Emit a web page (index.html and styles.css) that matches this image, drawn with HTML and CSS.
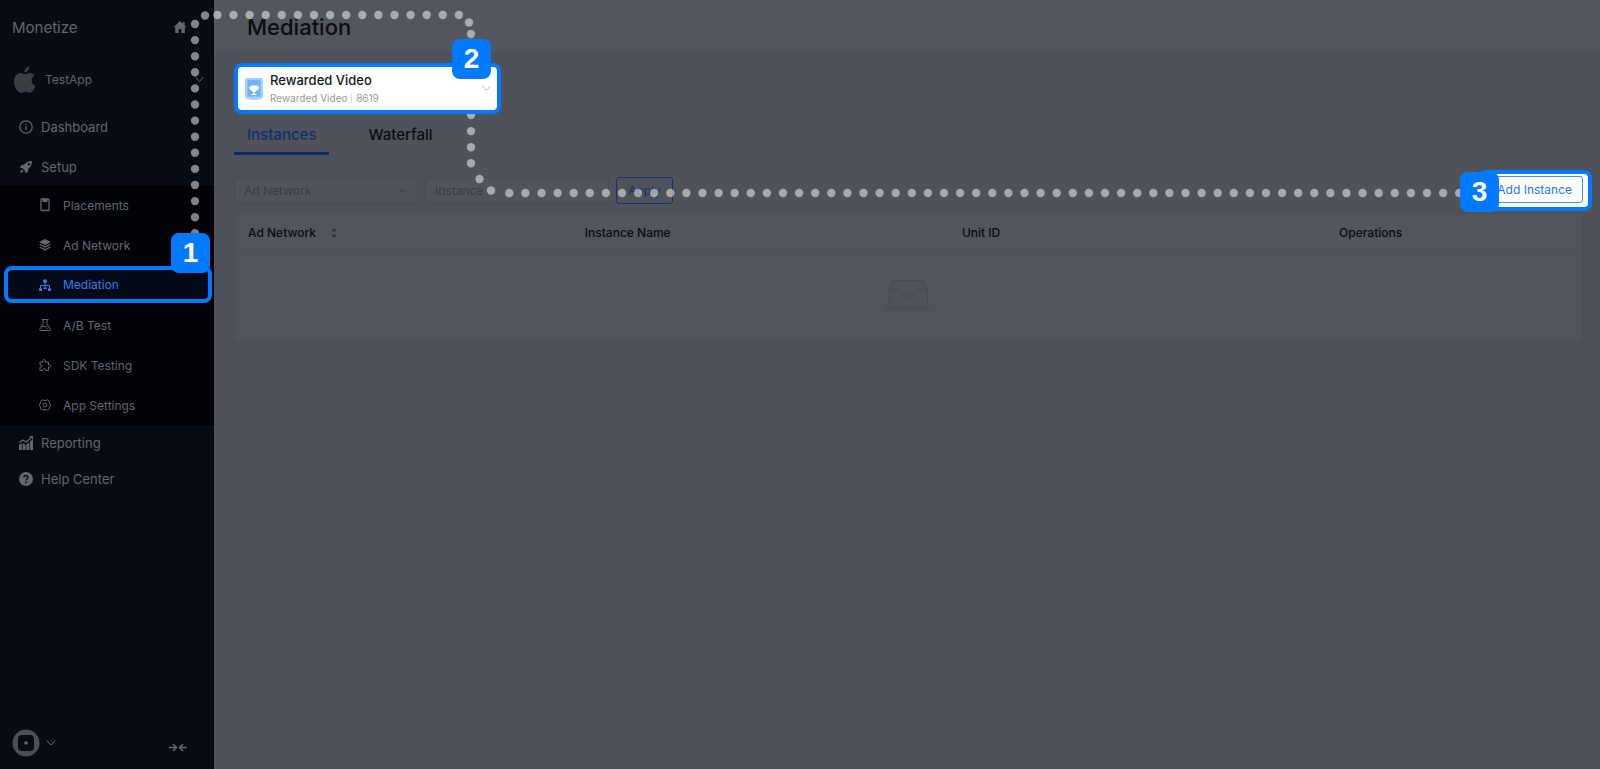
FILE: index.html
```html
<!DOCTYPE html>
<html lang="en">
<head>
    <meta charset="UTF-8">
    <meta name="viewport" content="width=device-width, initial-scale=1.0">
    <title>Mediation</title>
    <link rel="stylesheet" href="styles.css">
</head>
<body>
    <div class="layout">
        <aside class="sidebar">
            <div class="brand">
                <span>Monetize</span>
                <a href="#" class="home" aria-label="Home">
                    <svg width="14" height="14" viewBox="0 0 14 14"><path fill="currentColor" d="M7 1 0.5 7.2h1.7V13h3.5V9h2.6v4h3.5V7.2h1.7L11.6 5.300V2H10v1.800z"/></svg>
                </a>
            </div>
            <button type="button" class="app-switch">
                <svg width="22" height="28" viewBox="0 0 22 28"><path fill="#3b3d40" d="M15.500.5c.3 2.900-2.300 6-5.200 6C10 3.600 12.600.9 15.500.5zM11 8.300c1 0 2.500-1.400 5-1.300 1.800.1 3.500 1 4.500 2.500-4.300 2.700-3.500 8.700 1 10.500-.8 2.400-3 6.700-5.500 6.800-1.800 0-2.400-1.100-4.500-1.100s-2.800 1.100-4.500 1.100C3.700 26.800 0 20.800 0 15.500 0 10.200 3.200 7 6.500 7c2 0 3.400 1.300 4.500 1.300z"/></svg>
                <span>TestApp</span>
                <svg class="chevron" width="9" height="7" viewBox="0 0 9 7"><path d="M.5 1l4 4.500 4-4.500"/></svg>
            </button>

            <nav class="menu">
                <a href="#" class="menu-item">
                    <svg width="14" height="14" viewBox="0 0 14 14"><circle cx="7" cy="7" r="6.200" class="line"/><path class="line" d="M7 6v4M7 4v1"/></svg>
                    Dashboard
                </a>
                <a href="#" class="menu-item">
                    <svg width="14" height="14" viewBox="0 0 14 14"><path fill="currentColor" fill-rule="evenodd" d="M13 1C9.500 1 7 2.300 5.200 4.700L2.300 5 .7 7.800l2.500.2 2.800 2.800.2 2.500L9 11.700l.3-2.900C11.700 7 13 4.500 13 1zM8.500 4.200a1.300 1.300 0 1 1 1.300 1.300 1.300 1.300 0 0 1-1.300-1.300zM2.500 9.300 1 13l3.700-1.500z"/></svg>
                    Setup
                </a>
                <div class="submenu">
                    <a href="#" class="submenu-item">
                        <svg width="12" height="14" viewBox="0 0 12 14"><rect x="2" y="1" width="8" height="11.500" rx="1" class="line"/><path fill="currentColor" d="M3.500 1h5v3h-5z"/></svg>
                        Placements
                    </a>
                    <a href="#" class="submenu-item">
                        <svg width="12" height="12" viewBox="0 0 12 12"><path fill="currentColor" d="M6 0l6 3-6 3-6-3zM1.300 5L6 7.300 10.700 5l1.300.7L6 8.700 0 5.700zM1.300 7.800L6 10.100l4.700-2.300 1.300.7-6 3-6-3z"/></svg>
                        Ad Network
                    </a>
                    <div class="step step-menu">
                        <a href="#" class="submenu-item active">
                            <svg width="12" height="12" viewBox="0 0 12 12"><circle cx="6" cy="2.200" r="2" fill="currentColor"/><path class="line thin" d="M6 4v5.500M1.500 9.500V6.500h9v3"/><path fill="currentColor" d="M0 9.200h3v2.800H0zM4.500 8.500h3v1.500h-3zM9 9.200h3v2.800H9z"/></svg>
                            Mediation
                        </a>
                        <span class="badge">1</span>
                    </div>
                    <a href="#" class="submenu-item">
                        <svg width="12" height="12" viewBox="0 0 12 12"><path class="line thin" d="M2.500.5h7M4 .5v4L.6 10.700q0 .8.800.8h9.200q.8 0 .8-.8L8 4.500v-4M2.500 7.500c2-1 3 1 6 0M7.500 9.500h1"/></svg>
                        A/B Test
                    </a>
                    <a href="#" class="submenu-item">
                        <svg width="12" height="12" viewBox="0 0 12 12"><path class="line thin" d="M1 3h3c-.8-1.500 0-2.500 1-2.500S6.800 1.500 6 3h3.500v3c1.500-.7 2.200 0 2.200 1s-.7 1.700-2.200 1v3.500H6.700c.3-1.500-.5-2-1.400-2s-1.600.5-1.300 2H1V8c1.500.5 2-.2 2-1s-.5-1.500-2-1z"/></svg>
                        SDK Testing
                    </a>
                    <a href="#" class="submenu-item">
                        <svg width="12" height="12" viewBox="0 0 12 12"><path class="line thin" d="M3.800.8 5 1.400h2L8.200.8l2.300 1.400v1.500l1 2.300-1 2.300v1.500l-2.300 1.400L7 10.600H5l-1.200.6-2.300-1.400V8.300L.5 6l1-2.300V2.200z"/><circle class="line thin" cx="6" cy="6" r="1.900"/></svg>
                        App Settings
                    </a>
                </div>
                <a href="#" class="menu-item">
                    <svg width="14" height="14" viewBox="0 0 14 14"><path fill="currentColor" d="M0 9l2.800-2v7H0zM3.700 7.200 6.500 9v5H3.700zM7.400 8.500l2.800-2.200V14H7.400zM11 5.500 14 3v11h-3z"/><path class="line" d="M.5 6.500 4 4l3 2 6-5M10.500.7h3V3"/></svg>
                    Reporting
                </a>
                <a href="#" class="menu-item">
                    <svg width="14" height="14" viewBox="0 0 14 14"><circle cx="7" cy="7" r="7" fill="currentColor"/><path fill="none" stroke="#080b13" stroke-width="1.500" d="M4.900 5.600C4.900 2.800 9 3 9 5.300 9 6.900 7 6.700 7 8.600M7 9.500V11"/></svg>
                    Help Center
                </a>
            </nav>

            <div class="sidebar-footer">
                <button type="button" class="account" aria-label="Account">
                    <svg width="28" height="28" viewBox="0 0 28 28"><circle cx="14" cy="14" r="13.500" fill="#4c4e53"/><rect x="6" y="6" width="16" height="16" rx="4" fill="#080b13"/><rect x="12.500" y="12.500" width="3" height="3" fill="#6a6c70"/></svg>
                    <svg class="chevron" width="10" height="6" viewBox="0 0 10 6"><path d="M.5.5 5 5l4.500-4.500"/></svg>
                </button>
                <button type="button" class="collapse" aria-label="Collapse menu">
                    <svg width="18" height="9" viewBox="0 0 18 9"><path fill="none" stroke="currentColor" stroke-width="1.500" d="M0 4.500h7M4 1l3.500 3.500L4 8M18 4.500h-7M14 1l-3.500 3.500L14 8"/></svg>
                </button>
            </div>
        </aside>

        <main class="main">
            <header class="page-header">
                <h1>Mediation</h1>
            </header>
            <div class="content">
                <div class="step step-placement">
                    <button type="button" class="placement">
                        <svg width="18" height="22" viewBox="0 0 18 22"><path fill="#a4d0fb" d="M2 0h14q2 0 2 2v16q0 2-2 3-7 2-14 0-2-1-2-3V2q0-2 2-2z"/><path fill="#6fb2f5" d="M2.500 2h13v16.500h-13z"/><path fill="#fff" d="M5.500 7.500h7v1.200H14c0 2.300-.8 3.300-2.300 3.500-.5 1-1.200 1.500-2 1.700v2h2V17H6.300v-1.100h2v-2c-.8-.2-1.500-.7-2-1.700C4.800 12 4 11 4 8.700h1.500z"/></svg>
                        <span class="placement-text">
                            <span class="placement-name">Rewarded Video</span>
                            <span class="placement-info">Rewarded Video <i></i> 8619</span>
                        </span>
                        <svg class="chevron" width="9" height="7" viewBox="0 0 9 7"><path d="M.5 1l4 4.500 4-4.500"/></svg>
                    </button>
                    <span class="badge">2</span>
                </div>

                <nav class="tabs">
                    <a href="#" class="tab active">Instances</a>
                    <a href="#" class="tab">Waterfall</a>
                </nav>

                <div class="toolbar">
                    <form class="filters">
                        <div class="select-wrap">
                            <select class="field" aria-label="Ad Network">
                                <option>Ad Network</option>
                            </select>
                            <svg class="chevron" width="8" height="6" viewBox="0 0 8 6"><path d="M1 1l3 3.500L7 1"/></svg>
                        </div>
                        <input class="field" type="text" placeholder="Instance" aria-label="Instance">
                        <button type="button" class="apply">Apply</button>
                    </form>
                    <div class="step step-add">
                        <button type="button" class="add">Add Instance</button>
                        <span class="badge">3</span>
                    </div>
                </div>

                <table class="instances">
                    <thead>
                        <tr>
                            <th class="col-network">Ad Network
                                <svg width="6" height="10" viewBox="0 0 6 10"><path fill="#33363c" d="M3 0l3 3.500H0zM3 10 0 6.500h6z"/></svg>
                            </th>
                            <th class="col-wide">Instance Name</th>
                            <th class="col-wide">Unit ID</th>
                            <th>Operations</th>
                        </tr>
                    </thead>
                    <tbody>
                        <tr>
                            <td colspan="4">
                                <svg width="54" height="40" viewBox="0 0 54 40"><ellipse cx="27" cy="33" rx="26" ry="4" fill="#4f5259"/><path fill="#50535a" stroke="#484b52" d="M7.500 14 12 4.500h28L45.500 14v16q0 2.500-2.500 2.500H10q-2.500 0-2.500-2.500z"/><path fill="none" stroke="#484b52" d="M7.500 14H17q2 0 2 3t3 3h9q3 0 3-3t2-3h9.500"/></svg>
                            </td>
                        </tr>
                    </tbody>
                </table>
            </div>
        </main>
    </div>

    <!-- dotted route that joins the three steps -->
    <svg class="route" aria-hidden="true">
        <line x1="195" y1="24" x2="195" y2="240"/>
        <circle cx="205" cy="15.500" r="4.200"/>
        <line x1="217.400" y1="15" x2="460" y2="15"/>
        <circle cx="469" cy="22.500" r="4.200"/>
        <circle cx="471" cy="34" r="4.200"/>
        <line x1="471" y1="115" x2="471" y2="165"/>
        <circle cx="479.500" cy="179" r="4.200"/>
        <circle cx="491" cy="190.500" r="4.200"/>
        <line x1="509.300" y1="193" x2="91.400%" y2="193"/>
    </svg>
</body>
</html>
```

FILE: styles.css
```css
:root {
    --blue: #007bff;
    --side: #080b13;
    --side-dark: #010208;
    --side-text: #64666b;
    --page: #4f5259;
    --line: #494c53;
    --line-soft: #4d5057;
    --ink: #0a0c10;
}

* {
    box-sizing: border-box;
}

body {
    margin: 0;
    background: var(--page);
    color: var(--ink);
    font-family: Inter, "Liberation Sans", sans-serif;
    font-size: 12px;
}

a {
    color: inherit;
    text-decoration: none;
}

button {
    padding: 0;
    border: none;
    background: none;
    color: inherit;
    font: inherit;
    text-align: left;
    cursor: pointer;
}

svg {
    flex: none;
}

.line {
    fill: none;
    stroke: currentColor;
    stroke-width: 1.3;
}

.thin {
    stroke-width: 1;
}

.chevron {
    fill: none;
    stroke: currentColor;
}

.layout {
    display: flex;
    min-height: 100vh;
}

/* sidebar */
.sidebar {
    flex: none;
    display: flex;
    flex-direction: column;
    width: 214px;
    background: var(--side);
    color: var(--side-text);
}

.brand {
    display: flex;
    align-items: center;
    justify-content: space-between;
    height: 54px;
    padding: 0 27px 0 12px;
    font-size: 15px;
}

.home {
    display: flex;
}

.app-switch {
    display: flex;
    align-items: center;
    gap: 9px;
    height: 55px;
    padding: 0 10px 4px 14px;
}

.app-switch .chevron {
    margin-left: auto;
}

.menu-item {
    display: flex;
    align-items: center;
    gap: 8px;
    height: 36px;
    padding-left: 19px;
    font-size: 13px;
}

.menu-item:first-child {
    margin-bottom: 4px;
}

.submenu {
    background: var(--side-dark);
}

.submenu-item {
    display: flex;
    align-items: center;
    gap: 12px;
    height: 40px;
    padding-left: 39px;
}

.submenu-item.active {
    height: 29px;
    padding-left: 31px;
    color: #2b7fe0;
}

.sidebar-footer {
    display: flex;
    align-items: center;
    justify-content: space-between;
    margin-top: auto;
    padding: 0 27px 12px 12px;
}

.account {
    display: flex;
    align-items: center;
    gap: 6px;
}

.collapse {
    padding-top: 8px;
}

/* tour steps */
.step {
    position: relative;
    z-index: 2;
    border: 4px solid var(--blue);
    border-radius: 8px;
}

.step-menu {
    margin: 1px 2px 2px 4px;
    background: #020a1a;
}

.step-placement {
    width: 267px;
    background: #fff;
}

.step-add {
    margin-right: -9px;
    padding: 2px 5px 4px 3px;
    background: #fff;
}

.badge {
    position: absolute;
    display: flex;
    align-items: center;
    justify-content: center;
    width: 39px;
    height: 40px;
    border-radius: 8px;
    background: var(--blue);
    color: #fff;
    font-family: "Liberation Sans", sans-serif;
    font-size: 28px;
    font-weight: 700;
}

.step-menu .badge {
    top: -37px;
    right: -2px;
}

.step-placement .badge {
    top: -28px;
    right: 6px;
}

.step-add .badge {
    top: -2px;
    left: -22px;
}

.route {
    position: absolute;
    top: 0;
    left: 0;
    z-index: 1;
    width: 100%;
    height: 260px;
    opacity: 0.5;
    pointer-events: none;
}

.route line {
    stroke: #fff;
    stroke-width: 8.4;
    stroke-linecap: round;
    stroke-dasharray: 0 16.1;
}

.route circle {
    fill: #fff;
}

/* main area */
.main {
    flex: 1;
    min-width: 0;
}

.page-header {
    display: flex;
    align-items: center;
    height: 54px;
    padding-left: 33px;
    background: #53565d;
    border-bottom: 1px solid var(--line-soft);
}

.page-header h1 {
    margin: 0;
    font-size: 22px;
    font-weight: 500;
}

.content {
    padding: 9px 17px 0 20px;
}

.placement {
    display: flex;
    align-items: center;
    gap: 7px;
    width: 100%;
    height: 43px;
    padding: 0 6px 0 7px;
}

.placement-text {
    display: flex;
    flex-direction: column;
    flex: 1;
    gap: 4px;
    padding-bottom: 2px;
    line-height: 16px;
}

.placement-name {
    color: #16181c;
    font-size: 13px;
    font-weight: 500;
}

.placement-info {
    color: #999;
    font-size: 10px;
    line-height: 12px;
}

.placement-info i {
    display: inline-block;
    width: 1px;
    height: 9px;
    margin: 0 1px;
    background: #ddd;
    vertical-align: middle;
}

.placement .chevron {
    color: #bbb;
}

.tabs {
    display: flex;
    gap: 26px;
    height: 41px;
}

.tab {
    display: flex;
    align-items: center;
    padding: 3px 13px 0;
    border-bottom: 3px solid transparent;
    font-size: 15px;
    font-weight: 500;
}

.tab.active {
    border-color: #092e66;
    color: #0b3270;
}

.toolbar {
    display: flex;
    align-items: center;
    justify-content: space-between;
    margin-top: 15px;
}

.filters {
    display: flex;
    gap: 7px;
}

.select-wrap {
    display: flex;
    align-items: center;
    position: relative;
    color: #3a3d44;
}

.select-wrap .chevron {
    position: absolute;
    right: 11px;
    pointer-events: none;
}

.field {
    width: 184px;
    height: 27px;
    padding: 0 9px;
    border: 1px solid var(--line);
    border-radius: 3px;
    background: #51545b;
    color: #3a3d44;
    font: inherit;
    appearance: none;
}

.field::placeholder {
    color: #3a3d44;
    opacity: 1;
}

.apply {
    width: 57px;
    height: 27px;
    border: 1px solid #17316e;
    border-radius: 3px;
    color: #17316e;
    text-align: center;
}

.add {
    width: 98px;
    height: 27px;
    padding-right: 10px;
    border: 1px solid #4a8ce0;
    border-radius: 3px;
    color: #2378e6;
    text-align: right;
}

.instances {
    width: 100%;
    margin-top: 2px;
    border: 1px solid var(--line-soft);
    border-spacing: 0;
    background: #52555c;
    table-layout: fixed;
}

.instances th {
    height: 39px;
    padding: 0 0 2px 13px;
    border-bottom: 1px solid var(--line-soft);
    font-weight: 500;
    text-align: left;
}

.instances .col-network {
    width: 25%;
}

.instances .col-wide {
    width: 28%;
}

.col-network svg {
    margin-left: 12px;
    vertical-align: middle;
}

.instances td {
    height: 88px;
    padding: 0;
    text-align: center;
    vertical-align: middle;
}
```
